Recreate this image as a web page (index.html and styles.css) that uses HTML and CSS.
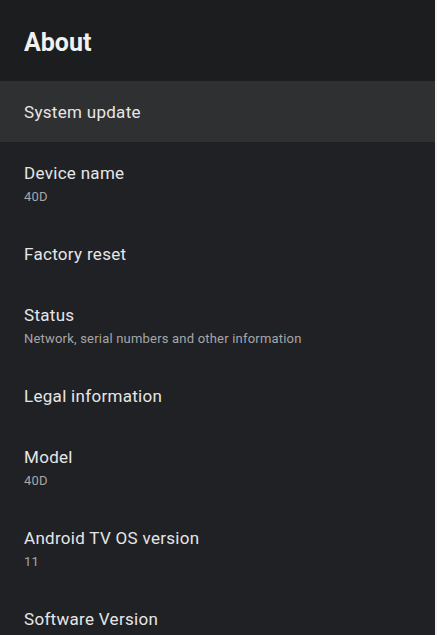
FILE: index.html
```html
<!DOCTYPE html>
<html lang="en">
<head>
<meta charset="utf-8">
<title>About</title>
<link rel="stylesheet" href="styles.css">
</head>
<body>
<div class="screen">
  <header class="header">
    <h1 class="title">About</h1>
  </header>
  <ul class="list">
    <li class="item selected"><div class="item-title">System update</div></li>
    <li class="item"><div class="item-title">Device name</div><div class="item-sub">40D</div></li>
    <li class="item"><div class="item-title">Factory reset</div></li>
    <li class="item"><div class="item-title">Status</div><div class="item-sub">Network, serial numbers and other information</div></li>
    <li class="item"><div class="item-title">Legal information</div></li>
    <li class="item"><div class="item-title">Model</div><div class="item-sub">40D</div></li>
    <li class="item"><div class="item-title">Android TV OS version</div><div class="item-sub">11</div></li>
    <li class="item"><div class="item-title">Software Version</div><div class="item-sub">&nbsp;</div></li>
  </ul>
</div>
</body>
</html>
```

FILE: styles.css
```css
html, body {
  margin: 0;
  padding: 0;
  background: #f4f4f4;
  height: 100%;
  overflow: hidden;
}

.screen {
  width: 435px;
  height: 635px;
  background: #202125;
  font-family: Roboto, "Noto Sans", sans-serif;
  overflow: hidden;
}

.header {
  background: #1c1d1f;
  padding: 28px 24px 23px;
}

.title {
  margin: 0;
  font-size: 25px;
  line-height: 30px;
  font-weight: 700;
  color: #f1f1f1;
}

.list {
  list-style: none;
  margin: 0;
  padding: 0;
}

.item {
  padding: 20px 24px 19px;
}

.item.selected {
  background: #2f3032;
}

.item-title {
  font-size: 17px;
  line-height: 22px;
  letter-spacing: 0.3px;
  color: #e6e6e6;
}

.item-sub {
  margin-top: 5px;
  margin-bottom: -1px;
  font-size: 13px;
  line-height: 16px;
  letter-spacing: 0.2px;
  color: #a6a6a8;
}
```
